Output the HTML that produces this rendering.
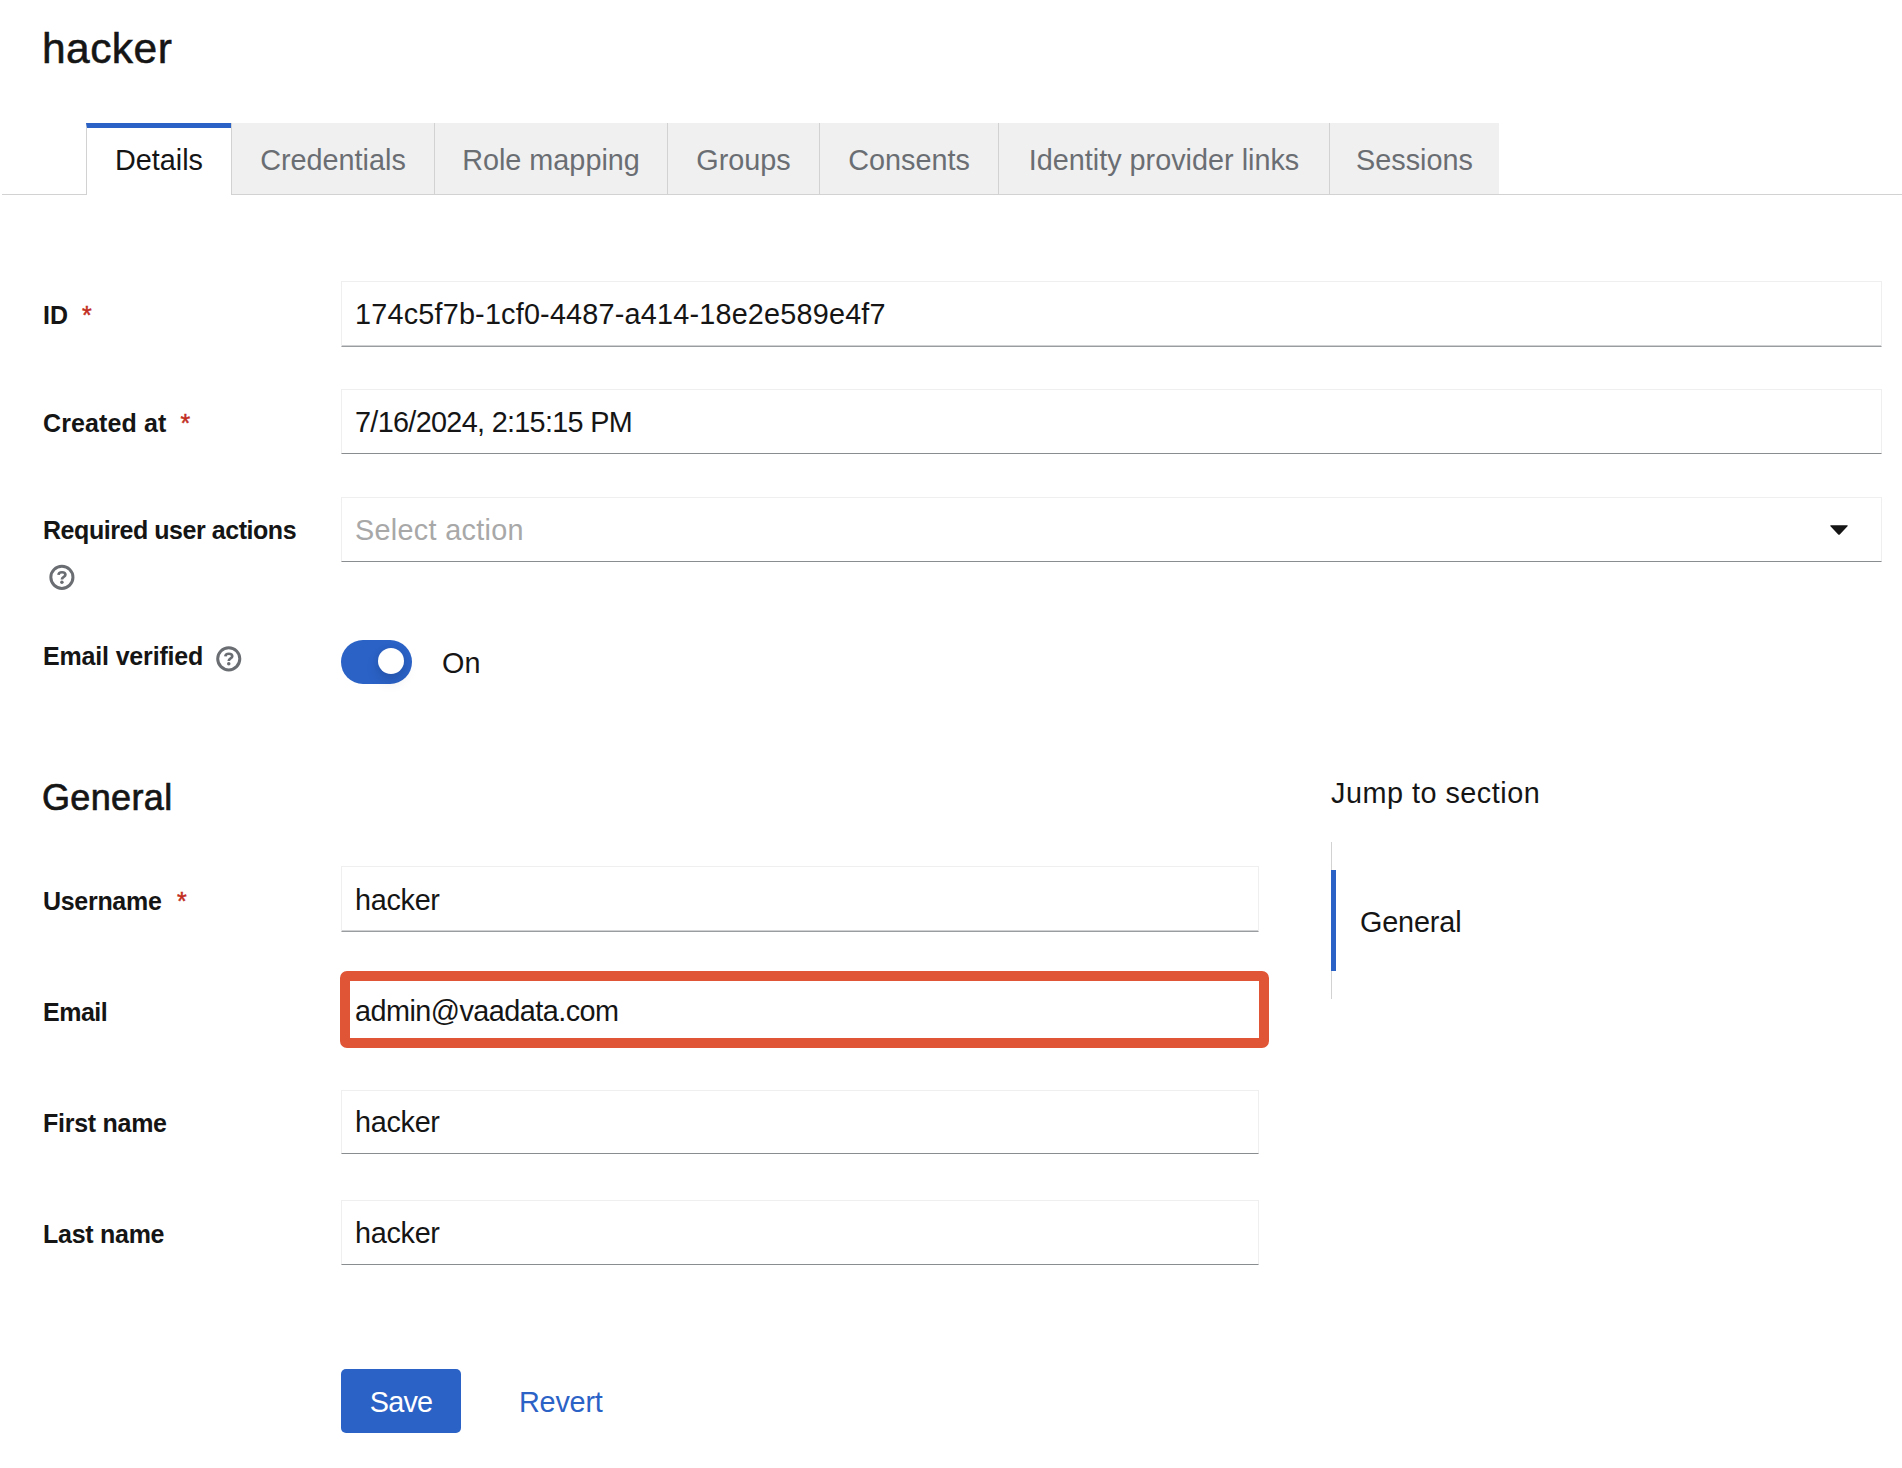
<!DOCTYPE html>
<html lang="en">
<head>
<meta charset="utf-8">
<title>hacker - User details</title>
<style>
html,body{margin:0;padding:0;background:#fff;}
body{width:1902px;height:1468px;position:relative;overflow:hidden;font-family:"Liberation Sans",sans-serif;color:#151515;}
.abs{position:absolute;}
.t{position:absolute;white-space:nowrap;line-height:40px;height:40px;font-size:28.8px;color:#151515;}
.b{font-weight:bold;}
.req{color:#c22d1d;font-weight:normal;-webkit-text-stroke:0.45px #c22d1d;letter-spacing:0;}
.tab{position:absolute;top:123px;height:71px;padding-top:2px;background:#f0f0f0;box-sizing:border-box;border-left:1px solid #d2d2d2;color:#6a6e73;font-size:28.8px;line-height:71px;text-align:center;white-space:nowrap;}
.tab.cur{background:#fff;color:#151515;border-top:5px solid #2b62c6;height:72px;padding-top:0;line-height:65px;border-right:1px solid #d2d2d2;}
.inp{position:absolute;box-sizing:border-box;left:341px;height:65px;background:#fff;border:1px solid #efefef;border-bottom:1px solid #8a8d90;font-size:28.8px;line-height:62px;padding-left:13px;padding-top:var(--dy,0px);white-space:nowrap;color:#151515;overflow:hidden;}
.inp.tall{height:66px;border-bottom:1px solid #9a9da0;box-shadow:inset 0 -1px 0 #cfd1d3;}
.ph{color:#a8a8a8;}
</style>
</head>
<body>

<!-- page title -->
<div class="t" id="title" style="left:42px;top:26px;font-size:42.5px;letter-spacing:0.45px;line-height:46px;height:46px;-webkit-text-stroke:0.55px #151515;">hacker</div>

<!-- tabs -->
<div class="abs" style="left:2px;top:194px;width:1900px;height:1px;background:#d2d2d2;"></div>
<div class="tab cur" style="left:86px;width:146px;">Details</div>
<div class="tab" style="left:231px;width:203px;">Credentials</div>
<div class="tab" style="left:434px;width:233px;">Role mapping</div>
<div class="tab" style="left:667px;width:152px;">Groups</div>
<div class="tab" style="left:819px;width:179px;">Consents</div>
<div class="tab" style="left:998px;width:331px;">Identity provider links</div>
<div class="tab" style="left:1329px;width:170px;">Sessions</div>

<!-- top form -->
<div class="t b" style="left:43px;top:295px;font-size:25px;">ID <span class="req">&nbsp;*</span></div>
<div class="inp tall" style="top:281px;width:1541px;--dy:1px;letter-spacing:0.2px;">174c5f7b-1cf0-4487-a414-18e2e589e4f7</div>

<div class="t b" style="left:43px;top:403px;font-size:25px;letter-spacing:0.12px;">Created at <span class="req">&nbsp;*</span></div>
<div class="inp" style="top:389px;width:1541px;--dy:1px;letter-spacing:-0.68px;">7/16/2024, 2:15:15 PM</div>

<div class="t b" style="left:43px;top:510px;font-size:25px;letter-spacing:-0.45px;">Required user actions</div>
<div class="inp ph" style="top:497px;width:1541px;--dy:1px;letter-spacing:0.3px;">Select action</div>
<svg class="abs" style="left:1829px;top:524px;" width="20" height="12" viewBox="0 0 20 12"><path d="M2.2 1.2 H17.8 Q19.6 1.2 18.3 2.6 L11 10.2 Q10 11.2 9 10.2 L1.7 2.6 Q0.4 1.2 2.2 1.2 Z" fill="#151515"/></svg>

<svg class="abs help" style="left:46px;top:562px;" width="30" height="30" viewBox="0 0 30 30"><g transform="translate(15.90 15.35)" fill="none" stroke="#6a6e73"><circle cx="0" cy="0" r="11.05" stroke-width="3"/><path d="M-3.4 -2.5 C-3.3 -4.3 -1.9 -5.1 0.1 -5.1 C2.1 -5.1 3.5 -4 3.5 -2.5 C3.5 -0.2 0 -0.6 0 2.1" stroke-width="2.7"/><circle cx="0" cy="5" r="1.75" fill="#6a6e73" stroke="none"/></g></svg>

<div class="t b" style="left:43px;top:636px;font-size:25px;letter-spacing:-0.17px;">Email verified</div>
<svg class="abs help" style="left:213px;top:643px;" width="30" height="30" viewBox="0 0 30 30"><g transform="translate(15.75 15.85)" fill="none" stroke="#6a6e73"><circle cx="0" cy="0" r="11.05" stroke-width="3"/><path d="M-3.4 -2.5 C-3.3 -4.3 -1.9 -5.1 0.1 -5.1 C2.1 -5.1 3.5 -4 3.5 -2.5 C3.5 -0.2 0 -0.6 0 2.1" stroke-width="2.7"/><circle cx="0" cy="5" r="1.75" fill="#6a6e73" stroke="none"/></g></svg>

<!-- switch -->
<div class="abs" style="left:341px;top:640px;width:71px;height:44px;border-radius:22px;background:#2b62c6;"></div>
<div class="abs" style="left:378px;top:648px;width:26px;height:26px;border-radius:50%;background:#fff;box-shadow:0 7px 14px rgba(3,3,3,.12),0 0 7px rgba(3,3,3,.06);"></div>
<div class="t" style="left:442px;top:643px;">On</div>

<!-- General section -->
<div class="t" id="gen" style="left:42px;top:776px;font-size:36px;line-height:44px;height:44px;letter-spacing:0.35px;-webkit-text-stroke:0.7px #151515;">General</div>

<div class="t b" style="left:43px;top:881px;font-size:25px;letter-spacing:-0.3px;">Username <span class="req" style="margin-left:2px;">&nbsp;*</span></div>
<div class="inp tall" style="top:866px;width:918px;--dy:2px;letter-spacing:-0.3px;">hacker</div>

<div class="t b" style="left:43px;top:992px;font-size:25px;letter-spacing:-0.5px;">Email</div>
<div class="abs" style="left:340px;top:971px;width:929px;height:77px;box-sizing:border-box;border:10px solid #e05535;border-radius:7px;background:#fff;"></div>
<div class="t" style="left:355px;top:991px;letter-spacing:-0.53px;">admin@vaadata.com</div>

<div class="t b" style="left:43px;top:1103px;font-size:25px;letter-spacing:-0.27px;">First name</div>
<div class="inp" style="top:1090px;height:64px;width:918px;--dy:0px;letter-spacing:-0.3px;">hacker</div>

<div class="t b" style="left:43px;top:1214px;font-size:25px;letter-spacing:-0.27px;">Last name</div>
<div class="inp" style="top:1200px;width:918px;--dy:1px;letter-spacing:-0.3px;">hacker</div>

<!-- buttons -->
<div class="abs" style="left:341px;top:1369px;width:120px;height:64px;border-radius:5px;background:#2b62c6;color:#fff;font-size:28.8px;line-height:66px;letter-spacing:-0.8px;text-align:center;">Save</div>
<div class="t" style="left:519px;top:1382px;color:#2b62c6;letter-spacing:-0.2px;">Revert</div>

<!-- jump links -->
<div class="t" style="left:1331px;top:773px;letter-spacing:0.5px;">Jump to section</div>
<div class="abs" style="left:1331px;top:842px;width:1px;height:157px;background:#d2d2d2;"></div>
<div class="abs" style="left:1331px;top:870px;width:5px;height:101px;background:#2b62c6;"></div>
<div class="t" style="left:1360px;top:902px;letter-spacing:-0.15px;">General</div>

</body>
</html>
